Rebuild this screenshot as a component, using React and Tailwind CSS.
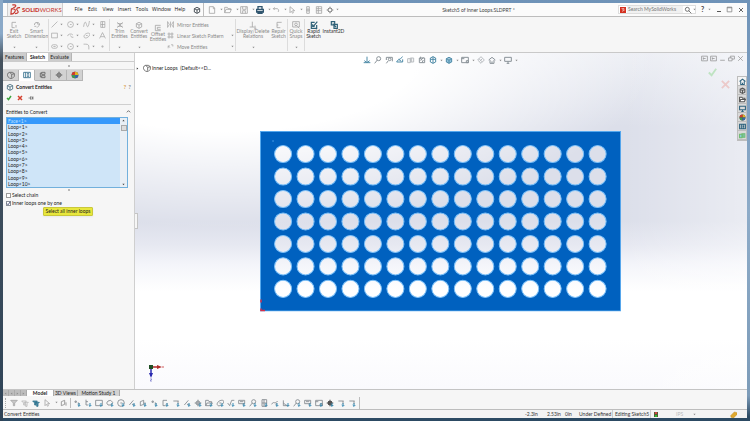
const PATHS = {
    exit: 'M9 2H3v8h4M9 6v4',
    dim: 'M2 6a4 4 0 0 1 8 0M6 3l3 4-3 3M2 8h3',
    line: 'M1 11 11 1',
    circle: 'M11 6a5 5 0 1 1-10 0 5 5 0 0 1 10 0M5 6h3',
    spline: 'M1 10c2-12 4-8 5-4s3 8 5-6',
    mesh: 'M3 1h7v10H3zM6 1v10M3 6h7',
    rect: 'M1 2h10v8H1z',
    arc: 'M1 7a5 4 0 0 1 9-2M6 6l2 3h3',
    ellipse: 'M3 10c-4-3 2-9 7-8s-2 10-7 8M5 6h3',
    text: 'M1 11 6 1l5 10M3 8h6',
    slot: 'M4 3h4a3 3 0 0 1 0 6H4a3 3 0 0 1 0-6M4 6h4',
    fillet: 'M1 2h4c4 0 5 2 5 5v4',
    point: 'M5 5h2v2H5z',
    trim: 'M2 2l8 8M10 2l-8 8M2 4h8M2 8h8',
    cube: 'M2 4l4-2 4 2v5l-4 2-4-2zM2 4l4 2 4-2M6 6v5',
    part: 'M4 2a4 4 0 0 0-2 7l2 2h4l3-3V4L8 2zM4 2l3 3v5M7 5l4-1',
    offset: 'M10 2H2v8h8M10 5H5v3h5',
    mirror: 'M1 1v10M1 1l3 5-3 5M11 1v10M11 1 8 6l3 5M6 1v10',
    pattern: 'M2 2h3v3H2zM7 2h3v3H7zM2 7h3v3H2zM7 7h3v3H7z',
    move: 'M2 9V5h3M7 3h3v3M2 5l3 3',
    relation: 'M5 1v8M1 9h7M9 7v4M8 11h3',
    repair: 'M10 2H3v8h5M3 6h2',
    snaps: 'M1 1h10v8H1zM8 5a2 2 0 1 1-4 0 2 2 0 0 1 4 0M8 8l3 3',
    rapid: 'M10 6v5H2V2h5M5 8l6-7M4 5v3h3',
    instant: 'M2 1h5v5H2zM6 5h5v6H6zM4 4l5 5',
    doc: 'M2 1h6l2 2v8H2zM8 1v3h2',
    open: 'M1 10V2h4l1 2h4v2M1 10l2-5h8l-2 5z',
    save: 'M1 1h10v10H1zM4 1v4h5V1M4 11V7h4v4',
    print: 'M3 5V1h6v4M1 5h10v4H1zM3 8h6v3H3z',
    undo: 'M4 2 2 4l2 2M2 4h6a3 3 0 0 1 1 5',
    cursor: 'M3 1v9l2-2 2 3 1-1-1-3h3z',
    rebuild: 'M4 1h4v10H4zM6 3v6M3 6h6',
    props: 'M2 1h8v10H2zM5 1v10M2 4h8M2 7h8',
    gear: 'M9 6a3 3 0 1 1-6 0 3 3 0 0 1 6 0M6 1v3M6 8v3M1 6h3M8 6h3M3 3l1 1M9 9 8 8M9 3 8 4M3 9l1-1',
    search: 'M8 5a3 3 0 1 1-6 0 3 3 0 0 1 6 0M7 7l4 4',
    fit: 'M6 1v8M2 7l4 3 4-3M1 10h10',
    zoom: 'M10 4a3 3 0 1 1-6 0 3 3 0 0 1 6 0M5 6l-4 5',
    zoomArea: 'M2 2h9v6M2 2v4M9 5a2 2 0 1 1-4 0 2 2 0 0 1 4 0M5 7l-3 4',
    view: 'M1 9c1-4 5-3 9-8M1 9h9V5M4 5l4 3',
    section: 'M1 4h4v6H1zM5 3h5v6H5zM7 3v6',
    orient: 'M2 3h8v7H2zM4 1v4M4 7l4-5M8 6l-2 4',
    display: 'M2 3l4-2 4 2v6l-4 2-4-2zM6 1v10M2 5h8',
    scene: 'M1 2h10v8H1zM1 4h4M8 7h3v3H8z',
    monitor: 'M1 2h10v6H1zM6 8v3M4 11h4',
    home: 'M1 6l5-4 5 4M3 6v5h6V6M6 11V8',
    folder: 'M1 10V2h4l1 2h4v2M1 10l2-4h8l-2 4z',
    list: 'M1 2h10v8H1zM4 2v8M6 4h3M6 6h3M6 8h3',
    filter: 'M1 2h10L7 6v4H5V6z',
    filters: 'M1 3h7L6 6v3H4V6zM5 5h6L9 7v4H7V8z',
    target: 'M9 6a3 3 0 1 1-6 0 3 3 0 0 1 6 0M6 1v10M1 6h10',
    shade: 'M6 1l5 5-5 5-5-5zM3 4l5 5M8 4 4 8',
    config: 'M4 2h5v3H4zM4 7h5v3H4zM4 3H2v6h2',
    check: 'M2 6l3 3 5-7',
    cross: 'M2 2l8 8M10 2l-8 8',
    pin: 'M1 6h4M5 3v6M5 4h4v4H5M10 3v6',
    min: 'M2 9h8',
    max: 'M2 2h8v8H2zM2 3h8',
    restore: 'M1 5h6v5H1zM4 5V2h7v5H7',
    chevron: 'M2 8l4-4 4 4',
    split: 'M1 2h10v8H1zM4 6h4M4 4v4',
    corner: 'M2 3h8M9 3v5',
    hook: 'M3 1v8h3M3 4h3',
    slash: 'M2 9 8 2M6 8h4',
    poly: 'M3 3l4-1 3 3-2 4H3L1 6z',
    plane: 'M2 4l5-2v6l-5 2zM9 5v5',
    dot: 'M3 3h2v2H3zM7 6h2v4',
    angle: 'M2 2v8h8M2 6l5 4',
    tick: 'M1 6l3 4 3-8h4',
    note: 'M1 2h9v5H1zM3 4h5M8 7v3',
    wave: 'M1 8c3-6 4 1 9-5M8 6v4',
};

const Icon = ({ name, size = 'size-2', color = 'text-[#a3a3a3]', accent, fill = 'none', weight = 1.2 }) => (
    <svg viewBox="0 0 12 12" className={`${size} ${color} shrink-0`} fill={fill} stroke="currentColor" strokeWidth={weight} aria-hidden="true">
        <path d={PATHS[name]} />
        {accent && <path d="M9 6v5M7 9l2 2 2-2" stroke={accent} strokeWidth="1.500" />}
    </svg>
);

const Caret = ({ color = 'text-[#8c8c8c]' }) => (
    <svg viewBox="0 0 4 4" className={`size-[3px] shrink-0 ${color}`} aria-hidden="true">
        <path d="M.5 1h3L2 3z" fill="currentColor" />
    </svg>
);

const Ball = ({ size = 'size-2' }) => (
    <svg viewBox="0 0 12 12" className={size} aria-hidden="true">
        <circle cx="6" cy="6" r="5" fill="#3a3f46" />
        <path d="M6 6V1a5 5 0 0 1 5 5z" fill="#e0b321" />
        <path d="M6 6H1a5 5 0 0 1 5-5z" fill="#cf3b2e" />
        <path d="M6 6v5a5 5 0 0 1-5-5z" fill="#3f9650" />
        <path d="M6 6h5a5 5 0 0 1-5 5z" fill="#3667a8" />
    </svg>
);

const menus = [
    ['File', 'w-[13px]'],
    ['Edit', 'w-[15px]'],
    ['View', 'w-4'],
    ['Insert', 'w-[17px]'],
    ['Tools', 'w-[18px]'],
    ['Window', 'w-[21px]'],
    ['Help', 'w-4'],
];

const quickTools = ['doc', 'open', 'save', 'print', 'undo', 'cursor'];

const TitleBar = () => (
    <header className="flex h-[14px] items-center border-b border-[#bdbdbd] bg-[#fbfbfb]">
        <div className="ml-1 flex h-full w-14 shrink-0 items-center gap-px border-x border-[#cfcfcf] bg-[#f1f1f1] px-[2px]">
            <svg viewBox="0 0 24 24" className="size-[11px] shrink-0" fill="none" stroke="#c8372f" strokeWidth="2.500" aria-hidden="true">
                <path d="M5 2h5c5 0 2 6-3 6M3 11h5c7 0 3 11-6 11zl3-2" />
                <path d="M22 8c-7-1-9 3-6 6s3 7-5 7" />
            </svg>
            <span className="pt-px text-[6px] leading-none text-[#c8372f]"><b className="font-black">SOLID</b>WORKS</span>
        </div>
        <nav className="ml-[9px] flex shrink-0 font-['Open_Sans'] text-[5px] leading-none text-[#111111]">
            {menus.map(([label, width]) => (
                <button key={label} className={`${width} flex justify-center`}>{label}</button>
            ))}
        </nav>
        <button className="ml-[5px] shrink-0" aria-label="Pin menu"><Icon name="cube" color="text-[#4f565d]" weight={1.5} /></button>
        <div className="ml-[2px] flex h-full shrink-0 items-center border-l border-[#bdbdbd] pl-1">
            {quickTools.map((name) => (
                <button key={name} className="flex w-4 items-center gap-1" aria-label={name}>
                    <Icon name={name} color={name === 'print' ? 'text-[#30566f]' : 'text-[#a3a3a3]'} weight={name === 'print' ? 2 : 1.2} />
                    <Caret />
                </button>
            ))}
            <button className="w-[11px]" aria-label="Rebuild"><Icon name="rebuild" /></button>
            <button className="w-[11px]" aria-label="Properties"><Icon name="props" /></button>
            <button className="flex items-center gap-[2px]" aria-label="Options"><Icon name="gear" color="text-[#777777]" /><Caret /></button>
        </div>
        <h1 className="min-w-0 flex-1 truncate text-center text-[5px] leading-[8px] text-[#444444]">Sketch5 of Inner Loops.SLDPRT *</h1>
        <div className="flex h-[9px] w-[78px] shrink-0 items-center border border-[#dedede] bg-white">
            <svg viewBox="0 0 12 12" className="ml-px size-[6px] shrink-0" aria-hidden="true">
                <path d="M0 0h12v12H0z" fill="#d4301f" />
                <path d="M3 3h5L5 6h4L4 9" stroke="white" fill="none" />
            </svg>
            <input aria-label="Search" placeholder="Search MySolidWorks" className="ml-px w-[56px] bg-[#f1f1f1] pl-px text-[5px] leading-[7px] outline-none placeholder:text-[#777777]" />
            <button className="ml-px flex items-center gap-px" aria-label="Run search"><Icon name="search" color="text-[#555555]" /><Caret /></button>
        </div>
        <div className="flex w-[51px] shrink-0 items-center justify-between pr-[3px] pl-[5px] text-[7px] leading-none text-[#444444]">
            <button className="flex items-center gap-1" aria-label="Help"><b>?</b><Caret /></button>
            <button aria-label="Minimize"><Icon name="min" size="size-[6px]" color="text-[#555555]" weight={2} /></button>
            <button aria-label="Maximize"><Icon name="max" size="size-[7px]" color="text-[#777777]" /></button>
            <button aria-label="Close"><Icon name="cross" size="size-[6px]" color="text-[#666666]" weight={2} /></button>
        </div>
    </header>
);

const BigTool = ({ icon, lines, width, caret, active }) => (
    <button className={`${width} flex shrink-0 flex-col items-center pt-[3px] text-[5px] leading-[5px] ${active ? 'text-[#333333]' : 'text-[#8a8a8a]'}`}>
        <Icon name={icon} color={active ? 'text-[#2e6077]' : 'text-[#a3a3a3]'} weight={active ? 1.8 : 1.2} />
        {lines.map((line) => <span key={line} className="whitespace-nowrap">{line}</span>)}
        {caret && <span className="mt-auto mb-[3px]"><Caret /></span>}
    </button>
);

const Divider = () => <span className="my-px w-px shrink-0 bg-[#dcdcdc]" />;

const sketchTools = ['line', 'circle', 'spline', 'mesh', 'rect', 'arc', 'ellipse', 'text', 'slot', 'circle', 'fillet', 'point'];

const Ribbon = () => (
    <div className="flex h-[36px] border-b border-[#c9c9c9] bg-[#f6f6f6] pt-px">
        <BigTool icon="exit" lines={['Exit', 'Sketch']} width="w-[22px]" caret />
        <BigTool icon="dim" lines={['Smart', 'Dimension']} width="w-[23px]" caret />
        <Divider />
        <div className="grid w-[60px] shrink-0 grid-cols-[16px_16px_16px_8px] grid-rows-3 items-center pt-px pl-[2px]">
            {sketchTools.map((name, i) => (
                <button key={i} className="flex items-center gap-[2px]" aria-label={name}>
                    <Icon name={name} size="size-[7px]" />
                    {i % 4 < 3 && <Caret />}
                </button>
            ))}
        </div>
        <Divider />
        <BigTool icon="trim" lines={['Trim', 'Entities']} width="w-[19px]" caret />
        <BigTool icon="cube" lines={['Convert', 'Entities']} width="w-5" caret />
        <div className="flex pt-[3px]">
            <BigTool icon="offset" lines={['Offset', 'Entities']} width="w-[18px]" />
        </div>
        <div className="grid w-[68px] shrink-0 grid-rows-3 items-center pt-px text-[5px] leading-[6px] text-[#8a8a8a]">
            {[['mirror', 'Mirror Entities'], ['pattern', 'Linear Sketch Pattern'], ['move', 'Move Entities']].map(([icon, label], i) => (
                <button key={label} className="flex items-center gap-[3px] pr-px">
                    <Icon name={icon} size="size-[7px]" />
                    <span className="flex-1 text-left whitespace-nowrap">{label}</span>
                    {i > 0 && <Caret />}
                </button>
            ))}
        </div>
        <Divider />
        <BigTool icon="relation" lines={['Display/Delete', 'Relations']} width="w-[34px]" caret />
        <BigTool icon="repair" lines={['Repair', 'Sketch']} width="w-[17px]" />
        <Divider />
        <BigTool icon="snaps" lines={['Quick', 'Snaps']} width="w-4" caret />
        <Divider />
        <BigTool icon="rapid" lines={['Rapid', 'Sketch']} width="w-[17px]" active />
        <BigTool icon="instant" lines={['Instant2D']} width="w-[23px]" active />
    </div>
);

const entities = ['Face<1>', 'Loop<1>', 'Loop<2>', 'Loop<3>', 'Loop<4>', 'Loop<5>', 'Loop<6>', 'Loop<7>', 'Loop<8>', 'Loop<9>', 'Loop<10>'];

const Grip = () => <span className="mx-auto block size-[2px] rounded-full bg-[#a5a5a5]" />;

const PropertyPanel = () => (
    <aside className="flex w-[132px] shrink-0 flex-col border-r border-[#cfcfcf] bg-[#f6f6f6] text-[#222222]">
        <div className="flex h-[9px] shrink-0 border-b border-[#cccccc] text-[5px] leading-[8px]">
            <button className="w-[24px] border-r border-[#b5b5b5] bg-[#cdcdcd]">Features</button>
            <button className="w-[21px] bg-white font-bold">Sketch</button>
            <button className="w-[24px] border-r border-[#b5b5b5] bg-[#cdcdcd]">Evaluate</button>
        </div>
        <div className="flex h-[8px] shrink-0 items-center border-b border-[#d8d8d8]"><Grip /></div>
        <div className="flex h-[11px] shrink-0">
            {['part', 'list', 'config', 'target', 'ball'].map((name) => (
                <button key={name} aria-label={name} className={`flex w-4 items-center justify-center border-r border-b border-[#b5b5b5] ${name === 'list' ? 'border-b-transparent bg-white' : 'bg-[#d2d2d2]'}`}>
                    {name === 'ball' ? <Ball /> : <Icon name={name} color={name === 'list' ? 'text-[#356f8d]' : 'text-[#666666]'} weight={1.3} />}
                </button>
            ))}
        </div>
        <div className="mt-px flex h-[9px] items-center gap-[2px] px-[3px]">
            <Icon name="cube" color="text-[#43697c]" />
            <h2 className="flex-1 text-[5px] leading-[8px] font-bold">Convert Entities</h2>
            <span className="text-[6px] leading-none font-bold text-[#d8a04c]">?</span>
            <span className="text-[6px] leading-none text-[#777777]">?</span>
        </div>
        <div className="mx-[3px] flex h-[14px] items-center gap-[5px] border-b border-[#cfcfcf]">
            <button aria-label="OK"><Icon name="check" size="size-[6px]" color="text-[#3ca33c]" weight={3} /></button>
            <button aria-label="Cancel"><Icon name="cross" size="size-[6px]" color="text-[#d4412f]" weight={3} /></button>
            <button aria-label="Keep visible"><Icon name="pin" size="size-[6px]" color="text-[#555555]" /></button>
        </div>
        <div className="mt-px flex h-[11px] items-center justify-between px-[3px]">
            <h3 className="text-[5px] leading-[8px]">Entities to Convert</h3>
            <Icon name="chevron" size="size-[5px]" color="text-[#555555]" weight={2} />
        </div>
        <div className="mr-[6px] ml-[3px] flex h-[71px] shrink-0 border border-[#72b0dc] bg-[#cfe5f8]">
            <ul role="listbox" aria-label="Entities to Convert" className="flex flex-1 flex-col text-[5px] leading-[6px]">
                {entities.map((name, i) => (
                    <li key={name} role="option" aria-selected={i === 0} className={`flex flex-1 items-center pl-px ${i === 0 ? 'bg-[#3598fb] text-[#bfe0ff]' : ''}`}>{name}</li>
                ))}
            </ul>
            <div className="flex w-[7px] flex-col items-center justify-between bg-[#e9eff5] py-px">
                <div className="flex flex-col items-center gap-[3px]">
                    <span className="rotate-180"><Caret color="text-[#444444]" /></span>
                    <span className="h-[6px] w-[6px] border border-[#aaaaaa] bg-[#dddddd]" />
                </div>
                <Caret color="text-[#444444]" />
            </div>
        </div>
        <div className="pt-px"><Grip /></div>
        <div className="flex flex-col gap-[2px] px-[3px] pt-px text-[5px] leading-[6px]">
            <label className="flex items-center gap-px">
                <input type="checkbox" className="size-[5px] appearance-none border border-[#9a9a9a] bg-white" />
                Select chain
            </label>
            <label className="flex items-center gap-px">
                <span className="relative flex">
                    <input type="checkbox" defaultChecked className="size-[5px] appearance-none border border-[#8a8f99] bg-white" />
                    <span className="pointer-events-none absolute inset-0"><Icon name="check" size="size-[5px]" color="text-[#333b66]" weight={2} /></span>
                </span>
                Inner loops one by one
            </label>
        </div>
        <div role="tooltip" className="mt-px ml-10 flex h-[9px] w-[50px] items-center justify-center rounded-[1px] border border-[#c9c83c] bg-[#e8e73c] text-[5px] leading-none whitespace-nowrap shadow-xs">Select all inner loops</div>
    </aside>
);

const headsUp = [
    ['fit'], ['zoom'], ['zoomArea'], ['view'], ['section'], ['orient'],
    ['display', true], ['cube', true], ['scene', true], ['shade'], ['home', true], ['monitor', true],
];

const blueTools = ['fit', 'view', 'display', 'cube'];
const paleTools = ['section', 'shade'];

const COLS = 15;
const ROWS = 7;

const Plate = () => {
    const holes = [];
    for (let r = 0; r < ROWS; r++) {
        for (let c = 0; c < COLS; c++) {
            holes.push([23 + c * 22.4, 23 + r * 22.4]);
        }
    }
    return (
        <svg viewBox="0 0 360 180" className="mr-px w-[59%] overflow-visible" role="img" aria-label="Perforated plate">
            <mask id="holes">
                <path d="M0 0h360v180H0z" fill="white" />
                {holes.map(([x, y], i) => <circle key={i} cx={x} cy={y} r="8.500" fill="black" />)}
            </mask>
            <path d="M.5.5h359v179H.5z" fill="#0061bf" stroke="#55a8ee" mask="url(#holes)" />
            {holes.map(([x, y], i) => <circle key={i} cx={x} cy={y} r="8.500" fill="none" stroke="#7cc0f8" />)}
            <circle cx="13" cy="10" r=".8" fill="#4ba0ea" />
            <path d="M1 168v3M1 177v2h4" stroke="#d4304a" strokeWidth="1.500" fill="none" />
        </svg>
    );
};

const paneTabs = [
    ['home', 'text-[#2f647f]'],
    ['cube', 'text-[#555555]'],
    ['folder', 'text-[#555555]'],
    ['monitor', 'text-[#2f647f]'],
    ['ball'],
    ['list', 'text-[#2f647f]'],
    ['section', 'text-[#6dbb6f]'],
];

const Viewport = () => (
    <main className="relative flex min-w-0 flex-1 items-center justify-center bg-[radial-gradient(70%_52%_at_15%_0%,#ffffff_0%,#ffffff_45%,#ffffff00_100%),linear-gradient(to_right,#ffffff00_80%,#ffffff66_100%),linear-gradient(to_bottom,#eceef4_0%,#dcdfea_22%,#dcdfea_50%,#e6e8f1_57%,#f4f5fa_63%,#ffffff_71%,#ffffff_85%,#fafafd_100%)]">
        <div className="absolute top-[11px] left-0 flex items-center gap-1 text-[5px] leading-[8px] text-[#222222]">
            <span className="ml-px rotate-270"><Caret color="text-[#333333]" /></span>
            <span className="flex items-center gap-px"><Icon name="part" color="text-[#555555]" /> Inner Loops&nbsp; (Default&lt;&lt;D...</span>
        </div>
        <div className="absolute inset-x-0 top-[3px] flex justify-center">
            {headsUp.map(([name, caret]) => (
                <button key={name} aria-label={name} className={`flex items-center gap-[3px] ${caret ? 'w-4' : 'w-[11px]'}`}>
                    <Icon name={name} color={blueTools.includes(name) ? 'text-[#4f8ba8]' : paleTools.includes(name) ? 'text-[#b9bdc1]' : 'text-[#8a9298]'} fill={name === 'cube' ? '#8fc0da' : 'none'} weight={1.5} />
                    {caret && <Caret />}
                </button>
            ))}
        </div>
        <div className="absolute top-[2px] right-[3px] flex gap-[2px]">
            {['split', 'split', 'min', 'restore', 'cross'].map((name, i) => (
                <button key={i} aria-label={name}><Icon name={name} size="size-[7px]" color="text-[#8c8c8c]" /></button>
            ))}
        </div>
        <div className="absolute top-[14px] right-[29px]"><Icon name="check" size="size-[11px]" color="text-[#bfe3c2]" weight={2} /></div>
        <div className="absolute top-[26px] right-4"><Icon name="cross" size="size-[11px]" color="text-[#eccaca]" weight={2} /></div>
        <Plate />
        <div className="absolute top-[160px] left-0 flex h-4 w-[3px] items-center border border-l-0 border-[#c4c4c4] bg-[#f6f6f6]" />
        <svg viewBox="0 0 20 20" className="absolute bottom-[6px] left-3 size-5" aria-hidden="true">
            <path d="M4 4v9" stroke="#2a2ab0" strokeWidth="1.500" />
            <path d="M2 10h4l-2 5z" fill="#2a2ab0" />
            <path d="M4 4h8" stroke="#b12a2a" strokeWidth="1.500" />
            <path d="M10 2v4l5-2z" fill="#b12a2a" />
            <path d="M2 2h4v4H2z" fill="#1f4f24" />
            <path d="m15 3 2 2m0-2-2 2" stroke="#d88" strokeWidth=".7" />
            <path d="M3 16h2l-2 2h2" stroke="#77c" strokeWidth=".7" fill="none" />
        </svg>
        <div className="absolute top-[23px] right-0 flex w-[10px] flex-col border border-[#bdbdbd] bg-[#d9d9d9]">
            {paneTabs.map(([name, color]) => (
                <button key={name} aria-label={name} className={`flex h-[9px] items-center justify-center border-b border-[#bdbdbd] ${name === 'home' ? 'bg-[#f4f4f4]' : ''}`}>
                    {name === 'ball' ? <Ball size="size-[7px]" /> : <Icon name={name} size="size-[7px]" color={color} weight={1.8} fill={name === 'section' ? '#8fd0e0' : name === 'folder' ? 'white' : 'none'} />}
                </button>
            ))}
        </div>
    </main>
);

const BottomTabs = () => (
    <div className="flex h-[7px] border-t border-[#c4c4c4] bg-[#f6f6f6] text-[5px] leading-[6px] text-[#222222]">
        {['first', 'previous', 'next', 'last'].map((name) => (
            <button key={name} aria-label={name} className="flex w-[6px] items-center justify-center border-r border-[#aaaaaa] bg-[#bdbdbd]">
                <span className={name === 'first' || name === 'previous' ? 'rotate-90' : 'rotate-270'}><Caret /></span>
            </button>
        ))}
        <button className="w-[26px] bg-white font-bold">Model</button>
        <button className="w-[25px] border-x border-[#aaaaaa] bg-[#d2d2d2]">3D Views</button>
        <button className="w-[42px] border-r border-[#aaaaaa] bg-[#d2d2d2]">Motion Study 1</button>
    </div>
);

const filters = [
    'dot', 'hook', 'rect', 'poly', 'circle', 'slash', 'plane', 'dot', 'exit', 'corner', 'slash', 'target', 'folder',
    'ellipse', 'tick', 'note', 'zoom', 'mesh', 'wave', 'angle', 'zoom', 'note', 'scene', 'gear', 'corner', 'corner',
];

const FilterBar = () => (
    <div className="flex h-[14px] items-center border-b border-[#bdbdbd] bg-[#f6f6f6] pl-[2px]">
        <span className="mr-1 h-[10px] border-l border-dotted border-[#aaaaaa]" />
        <button className="w-[11px]" aria-label="filter"><Icon name="filter" fill="#c9c9c9" /></button>
        <button className="w-[11px]" aria-label="clear filters"><Icon name="filters" color="text-[#b5b5b5]" /></button>
        <button className="w-[11px]" aria-label="all filters"><Icon name="filters" color="text-[#2f7089]" fill="#4a8fae" /></button>
        <button className="flex w-[17px] items-center gap-1" aria-label="select"><Icon name="cursor" /><Caret /></button>
        <button className="w-[10px]" aria-label="select over"><Icon name="plane" color="text-[#888888]" /></button>
        <span className="mr-[2px] h-[10px] w-px bg-[#bdbdbd]" />
        {filters.map((name, i) => (
            <button key={i} className="w-[11px]" aria-label={`${name} filter`}>
                <Icon name={name} color={name === 'gear' ? 'text-[#444444]' : 'text-[#7b8186]'} fill={name === 'gear' ? '#555555' : 'none'} accent="#3b8db5" />
            </button>
        ))}
        <span className="h-[12px] w-px bg-[#bdbdbd]" />
    </div>
);

const StatusBar = () => (
    <footer className="flex h-[8px] items-center bg-[#f3f3f3] pr-1 pl-px text-[5px] leading-[8px] whitespace-nowrap text-[#333333]">
        <span className="flex-1">Convert Entities</span>
        <span className="w-[22px]">-2.3in</span>
        <span className="w-[18px]">2.53in</span>
        <span className="w-[14px]">0in</span>
        <span className="w-[34px] border-r border-[#cccccc]">Under Defined</span>
        <span className="w-[38px] border-r border-[#cccccc] pl-[2px]">Editing Sketch5</span>
        <svg viewBox="0 0 4 5" className="ml-[3px] h-[5px] w-1" aria-hidden="true">
            <path d="M0 0h4v5H0z" fill="#555b30" />
            <path d="M1 0h2v2H1z" fill="#c44" />
            <path d="M1 3h2v2H1z" fill="#3b3" />
        </svg>
        <span className="ml-[18px] w-[17px] text-[#bbbbbb]">IPS</span>
        <Caret />
        <svg viewBox="0 0 8 8" className="ml-[34px] size-[7px]" aria-hidden="true">
            <path d="m1 5 4-4 3 1v2L4 8 1 7z" fill="#e0a92e" stroke="#b9851e" strokeWidth=".5" />
        </svg>
        <span className="w-[6px]" />
    </footer>
);

const App = () => (
    <div className="flex min-h-screen flex-col p-[3px] font-[Lato,sans-serif] [background:linear-gradient(to_bottom,#8aa9c8_0%,#8aa9c8_8%,#46535f_14%,#2f4458_100%)_left_top/3px_100%_no-repeat,linear-gradient(to_bottom,#6f93b8_0%,#8dabc8_50%,#7d9cb9_94%,#2c4a63_99%)]">
        <TitleBar />
        <Ribbon />
        <div className="flex min-h-0 flex-1">
            <PropertyPanel />
            <Viewport />
        </div>
        <BottomTabs />
        <FilterBar />
        <StatusBar />
    </div>
);

export default App;
